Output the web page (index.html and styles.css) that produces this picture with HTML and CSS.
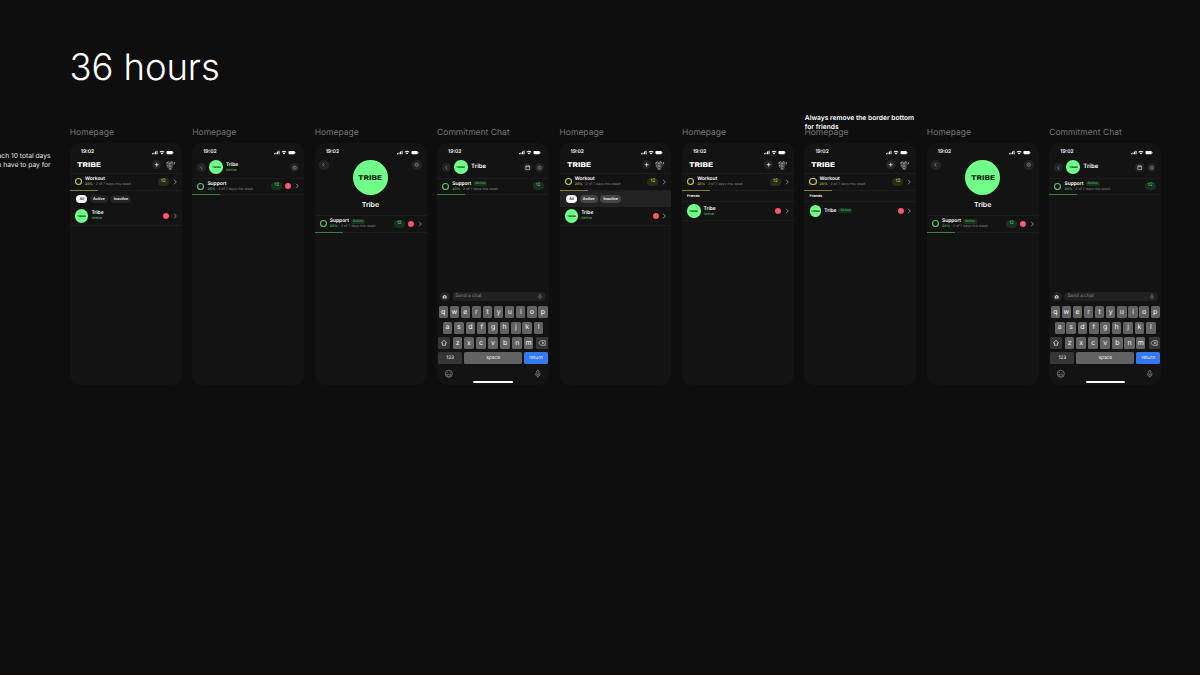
FILE: index.html
```html
<!DOCTYPE html>
<html lang="en">
<head>
<meta charset="utf-8">
<title>36 hours</title>
<link rel="stylesheet" href="styles.css">
</head>
<body>
<svg class="defs" aria-hidden="true">
  <symbol id="status" viewBox="0 0 22 5"><path d="M0 3.2h1v1.1H0zM1.5 2.5h1v1.8h-1zM3 1.6h1v2.7H3zM4.5.7h1v3.6h-1z"/><path d="M7.5 1.9Q10 -.3 12.500 1.900L11.800 2.600Q10 1.100 8.200 2.600ZM8.700 3Q10 2 11.300 3L10 4.400Z"/><rect x="14.500" y=".9" width="6.300" height="3.300" rx=".9"/><path d="M21.200 1.900h.4v1.300h-.4z"/></symbol>
  <symbol id="plus" viewBox="0 0 10 10"><path d="M5 2.900v4.200M2.900 5h4.200" fill="none" stroke="#ddd" stroke-width=".9"/></symbol>
  <symbol id="back" viewBox="0 0 10 10"><path d="M5.700 3.200 4 5l1.700 1.800" fill="none" stroke="#999" stroke-width=".7"/></symbol>
  <symbol id="gear" viewBox="0 0 10 10"><circle cx="5" cy="5" r="1.700" fill="none" stroke="#888" stroke-width=".9"/><circle cx="5" cy="5" r=".5" fill="#888"/></symbol>
  <symbol id="cal" viewBox="0 0 10 10"><path d="M3 3.200h4v3.700H3zM3 4h4M4 2.600v.8M6 2.600v.8" fill="none" stroke="#ccc" stroke-width=".65"/></symbol>
  <symbol id="next" viewBox="0 0 4 6"><path d="M1 .7 3.300 3 1 5.300" fill="none" stroke="#aaa" stroke-width=".75"/></symbol>
  <symbol id="face" viewBox="0 0 10 10"><path d="M1.200 2.500 3.200 1l1.500 1 1.900-1.400 1 1.400 1 2.400-1.400.8.300 1.700-1.200 2.700-1.500 1.100-1.500-.9.300-1.800-1.700-1.200z" fill="#4c4c4c"/><path d="M1.300 3.200l2-1.600M3.800 3.600l1.900-.7M3.600 5.600l2.400.3M6 1.400l1.200 1.500M8.900 1.900l.5 2.300M3.800 7.700l1.700.9M2 5l.8 1" stroke="#b5b5b5" stroke-width=".7" fill="none"/></symbol>
  <symbol id="camera" viewBox="0 0 10 10"><path d="M2.900 3.900h1l.5-.7h1.200l.5.7h1v3H2.900z" fill="#ccc"/><circle cx="5" cy="5.300" r=".8" fill="#333"/></symbol>
  <symbol id="mic" viewBox="0 0 8 10"><rect x="2.900" y="1.500" width="2.200" height="4.300" rx="1.100" fill="none" stroke="currentColor" stroke-width=".7"/><path d="M1.700 4.600v.6a2.300 2.300 0 0 0 4.600 0v-.6M4 7.500v1.300" fill="none" stroke="currentColor" stroke-width=".7"/></symbol>
  <symbol id="smile" viewBox="0 0 10 10"><circle cx="5" cy="5" r="3.700" fill="none" stroke="#999" stroke-width=".7"/><path d="M2.800 5.500h4.400a2.200 2.200 0 0 1-4.400 0z" fill="none" stroke="#999" stroke-width=".6"/><path d="M3.700 3.100v1M6.300 3.100v1" stroke="#999" stroke-width=".6"/></symbol>
  <symbol id="shift" viewBox="0 0 10 10"><path d="M5 1.500 8.300 5H6.800v2.900H3.200V5H1.700z" fill="none" stroke="#eee" stroke-width=".85"/></symbol>
  <symbol id="del" viewBox="0 0 10 10"><path d="M3.500 2.200h5.500v5.600H3.500L.9 5zM4.800 3.700l2.500 2.600M7.300 3.700 4.800 6.300" fill="none" stroke="#ddd" stroke-width=".8"/></symbol>
  <symbol id="word" viewBox="0 0 24 6"><text x="0" y="5.300" textLength="24" lengthAdjust="spacingAndGlyphs" font-size="6.600" font-weight="800">TRIBE</text></symbol>
</svg>

<main class="canvas">
  <h1 class="title">36 hours</h1>
  <p class="note note-left">ach 10 total days<br>u have to pay for</p>
  <p class="note note-top">Always remove the border bottom<br>for friends</p>

  <div class="frames">
    <section class="frame">
      <h2 class="label">Homepage</h2>
      <div class="phone">
        <div class="status"><span>19:02</span><svg><use href="#status"/></svg></div>
        <header class="bar home"><svg class="brand"><use href="#word"/></svg><svg class="round"><use href="#plus"/></svg><svg class="avatar"><use href="#face"/></svg></header>
        <div class="row workout"><i class="ring"></i><div class="info"><b>Workout</b><small><em>28%</em> · 2 of 7 days this week</small></div><span class="count">12</span><svg class="next"><use href="#next"/></svg></div>
        <nav class="chips"><span class="on">All</span><span>Active</span><span>Inactive</span></nav>
        <div class="row friend"><span class="logo"><svg><use href="#word"/></svg></span><div class="info"><b>Tribe</b><small><em>Active</em></small></div><span class="dot">1</span><svg class="next"><use href="#next"/></svg></div>
      </div>
    </section>

    <section class="frame">
      <h2 class="label">Homepage</h2>
      <div class="phone">
        <div class="status"><span>19:02</span><svg><use href="#status"/></svg></div>
        <header class="bar group"><svg class="round"><use href="#back"/></svg><span class="logo"><svg><use href="#word"/></svg></span><div class="info"><b>Tribe</b><small><em>Active</em></small></div><svg class="round"><use href="#gear"/></svg></header>
        <div class="row support"><i class="ring"></i><div class="info"><b>Support</b><small><em>28%</em> · 2 of 7 days this week</small></div><span class="count">12</span><span class="dot">1</span><svg class="next"><use href="#next"/></svg></div>
      </div>
    </section>

    <section class="frame">
      <h2 class="label">Homepage</h2>
      <div class="phone">
        <div class="status"><span>19:02</span><svg><use href="#status"/></svg></div>
        <header class="hero"><svg class="round"><use href="#back"/></svg><div class="profile"><span class="logo"><svg><use href="#word"/></svg></span><strong>Tribe</strong></div><svg class="round"><use href="#gear"/></svg></header>
        <div class="row support tall"><i class="ring"></i><div class="info"><b>Support <mark>Active</mark></b><small><em>28%</em> · 2 of 7 days this week</small></div><span class="count">12</span><span class="dot">1</span><svg class="next"><use href="#next"/></svg></div>
      </div>
    </section>

    <section class="frame">
      <h2 class="label">Commitment Chat</h2>
      <div class="phone">
        <div class="status"><span>19:02</span><svg><use href="#status"/></svg></div>
        <header class="bar group chat"><svg class="round"><use href="#back"/></svg><span class="logo"><svg><use href="#word"/></svg></span><div class="info"><b>Tribe</b></div><svg class="round"><use href="#cal"/></svg><svg class="round"><use href="#gear"/></svg></header>
        <div class="row support last"><i class="ring"></i><div class="info"><b>Support <mark>Active</mark></b><small><em>28%</em> · 2 of 7 days this week</small></div><span class="count">12</span></div>
        <div class="composer"><svg class="round"><use href="#camera"/></svg><div class="field">Send a chat<svg><use href="#mic"/></svg></div></div>
        <div class="keyboard">
          <div class="keys"><kbd>q</kbd><kbd>w</kbd><kbd>e</kbd><kbd>r</kbd><kbd>t</kbd><kbd>y</kbd><kbd>u</kbd><kbd>i</kbd><kbd>o</kbd><kbd>p</kbd></div>
          <div class="keys mid"><kbd>a</kbd><kbd>s</kbd><kbd>d</kbd><kbd>f</kbd><kbd>g</kbd><kbd>h</kbd><kbd>j</kbd><kbd>k</kbd><kbd>l</kbd></div>
          <div class="keys low"><kbd class="dark"><svg><use href="#shift"/></svg></kbd><kbd>z</kbd><kbd>x</kbd><kbd>c</kbd><kbd>v</kbd><kbd>b</kbd><kbd>n</kbd><kbd>m</kbd><kbd class="dark"><svg><use href="#del"/></svg></kbd></div>
          <div class="keys wide"><kbd class="dark">123</kbd><kbd>space</kbd><kbd class="return">return</kbd></div>
        </div>
        <div class="tools"><svg><use href="#smile"/></svg><svg><use href="#mic"/></svg></div>
        <div class="homebar"></div>
      </div>
    </section>

    <section class="frame">
      <h2 class="label">Homepage</h2>
      <div class="phone">
        <div class="status"><span>19:02</span><svg><use href="#status"/></svg></div>
        <header class="bar home"><svg class="brand"><use href="#word"/></svg><svg class="round"><use href="#plus"/></svg><svg class="avatar"><use href="#face"/></svg></header>
        <div class="row workout"><i class="ring"></i><div class="info"><b>Workout</b><small><em>28%</em> · 2 of 7 days this week</small></div><span class="count">12</span><svg class="next"><use href="#next"/></svg></div>
        <nav class="chips lit"><span class="on">All</span><span>Active</span><span>Inactive</span></nav>
        <div class="row friend"><span class="logo"><svg><use href="#word"/></svg></span><div class="info"><b>Tribe</b><small><em>Active</em></small></div><span class="dot">1</span><svg class="next"><use href="#next"/></svg></div>
      </div>
    </section>

    <section class="frame">
      <h2 class="label">Homepage</h2>
      <div class="phone">
        <div class="status"><span>19:02</span><svg><use href="#status"/></svg></div>
        <header class="bar home"><svg class="brand"><use href="#word"/></svg><svg class="round"><use href="#plus"/></svg><svg class="avatar"><use href="#face"/></svg></header>
        <div class="row workout"><i class="ring"></i><div class="info"><b>Workout</b><small><em>28%</em> · 2 of 7 days this week</small></div><span class="count">12</span><svg class="next"><use href="#next"/></svg></div>
        <h3 class="friends">Friends</h3>
        <div class="row friend"><span class="logo"><svg><use href="#word"/></svg></span><div class="info"><b>Tribe</b><small><em>Active</em></small></div><span class="dot">1</span><svg class="next"><use href="#next"/></svg></div>
      </div>
    </section>

    <section class="frame">
      <h2 class="label">Homepage</h2>
      <div class="phone">
        <div class="status"><span>19:02</span><svg><use href="#status"/></svg></div>
        <header class="bar home"><svg class="brand"><use href="#word"/></svg><svg class="round"><use href="#plus"/></svg><svg class="avatar"><use href="#face"/></svg></header>
        <div class="row workout"><i class="ring"></i><div class="info"><b>Workout</b><small><em>28%</em> · 2 of 7 days this week</small></div><span class="count">12</span><svg class="next"><use href="#next"/></svg></div>
        <h3 class="friends">Friends</h3>
        <div class="row friend compact"><span class="logo"><svg><use href="#word"/></svg></span><div class="info"><b>Tribe <mark>Active</mark></b></div><span class="dot">1</span><svg class="next"><use href="#next"/></svg></div>
      </div>
    </section>

    <section class="frame">
      <h2 class="label">Homepage</h2>
      <div class="phone">
        <div class="status"><span>19:02</span><svg><use href="#status"/></svg></div>
        <header class="hero"><svg class="round"><use href="#back"/></svg><div class="profile"><span class="logo"><svg><use href="#word"/></svg></span><strong>Tribe</strong></div><svg class="round"><use href="#gear"/></svg></header>
        <div class="row support tall"><i class="ring"></i><div class="info"><b>Support <mark>Active</mark></b><small><em>28%</em> · 2 of 7 days this week</small></div><span class="count">12</span><span class="dot">1</span><svg class="next"><use href="#next"/></svg></div>
      </div>
    </section>

    <section class="frame">
      <h2 class="label">Commitment Chat</h2>
      <div class="phone">
        <div class="status"><span>19:02</span><svg><use href="#status"/></svg></div>
        <header class="bar group chat"><svg class="round"><use href="#back"/></svg><span class="logo"><svg><use href="#word"/></svg></span><div class="info"><b>Tribe</b></div><svg class="round"><use href="#cal"/></svg><svg class="round"><use href="#gear"/></svg></header>
        <div class="row support last"><i class="ring"></i><div class="info"><b>Support <mark>Active</mark></b><small><em>28%</em> · 2 of 7 days this week</small></div><span class="count">12</span></div>
        <div class="composer"><svg class="round"><use href="#camera"/></svg><div class="field">Send a chat<svg><use href="#mic"/></svg></div></div>
        <div class="keyboard">
          <div class="keys"><kbd>q</kbd><kbd>w</kbd><kbd>e</kbd><kbd>r</kbd><kbd>t</kbd><kbd>y</kbd><kbd>u</kbd><kbd>i</kbd><kbd>o</kbd><kbd>p</kbd></div>
          <div class="keys mid"><kbd>a</kbd><kbd>s</kbd><kbd>d</kbd><kbd>f</kbd><kbd>g</kbd><kbd>h</kbd><kbd>j</kbd><kbd>k</kbd><kbd>l</kbd></div>
          <div class="keys low"><kbd class="dark"><svg><use href="#shift"/></svg></kbd><kbd>z</kbd><kbd>x</kbd><kbd>c</kbd><kbd>v</kbd><kbd>b</kbd><kbd>n</kbd><kbd>m</kbd><kbd class="dark"><svg><use href="#del"/></svg></kbd></div>
          <div class="keys wide"><kbd class="dark">123</kbd><kbd>space</kbd><kbd class="return">return</kbd></div>
        </div>
        <div class="tools"><svg><use href="#smile"/></svg><svg><use href="#mic"/></svg></div>
        <div class="homebar"></div>
      </div>
    </section>
  </div>
</main>
</body>
</html>
```
FILE: styles.css
```css
* { box-sizing: border-box; margin: 0; padding: 0; }
body { background: #0e0e0e; color: #fff; font-family: Inter, "Liberation Sans", sans-serif; overflow: hidden; text-rendering: geometricPrecision; }
.defs { position: absolute; width: 0; height: 0; }
svg { display: block; flex: none; }
.canvas { position: relative; width: 1200px; height: 675px; overflow: hidden; padding-top: 44px; border-bottom: 2px solid #16070a; }
.title { margin-left: 69.500px; height: 82px; font-size: 36.500px; line-height: 46px; font-weight: 350; letter-spacing: -.1px; }

/* Free-floating canvas notes */
.note { position: absolute; white-space: nowrap; }
.note-left { right: 1149.500px; top: 152px; font-size: 6.700px; line-height: 8.600px; text-align: right; color: #e4e4e4; }
.note-top { left: 804.800px; top: 114.300px; font-size: 6.700px; line-height: 8.600px; font-weight: 600; z-index: 1; }

.frames { display: flex; gap: 10.500px; padding-left: 69.800px; }
.frame { width: 111.950px; flex: none; }
.label { height: 17px; font-size: 8.500px; line-height: 14px; font-weight: 400; color: #737373; white-space: nowrap; letter-spacing: 0; }
.phone { display: flex; flex-direction: column; height: 242px; border-radius: 10px; background: #131313; overflow: hidden; }
.phone > * { flex-shrink: 0; }

.status { display: flex; justify-content: space-between; align-items: center; height: 14px; padding: 4px 8px 0 11px; font-size: 5px; font-weight: 600; }
.status svg { width: 22px; height: 5px; fill: #fff; }

.bar { display: flex; align-items: center; border-bottom: .5px solid #1c1c1c; }
.home { height: 16.500px; padding: 0 6.500px 0 7px; }
.brand { width: 24px; height: 6px; fill: #fff; margin-right: auto; }
.round { width: 9.400px; height: 9.400px; border-radius: 50%; background: #242424; }
.avatar { width: 10.500px; height: 10.500px; margin-left: 3.500px; }
.group { height: 21.700px; padding: 0 5px 0 4.500px; }
.group .logo { margin: 0 3.200px .5px; }
.group .info { padding-bottom: .5px; }
.group .round + .round { margin-left: 2.600px; }
.chat .logo { margin-right: 3.300px; }
.chat .info b { font-size: 6px; }

.logo { display: flex; align-items: center; justify-content: center; flex: none; width: 13.600px; height: 13.600px; border-radius: 50%; background: #70ff88; }
.logo svg { width: 9.200px; height: 2.600px; fill: #0b3514; }

.hero { display: flex; justify-content: space-between; height: 58.500px; padding: 3.300px 5px 0 4.600px; border-bottom: .5px solid #1c1c1c; }
.profile { display: flex; flex-direction: column; align-items: center; }
.profile .logo { width: 35px; height: 35px; }
.profile .logo svg { width: 24px; height: 6px; fill: #0b2511; }
.profile strong { margin-top: 4.400px; font-size: 7px; line-height: 9px; font-weight: 600; }

.row { display: flex; align-items: center; padding: 0 5px; border-bottom: .6px solid #1c1c1c; }
.workout, .support { background: linear-gradient(var(--line), var(--line)) 0 100% / 28px 1px no-repeat border-box; border-bottom-color: #ffffff0a; }
.workout { height: 17.500px; --line: #77782a; --tone: #c6ca42; --tint: #292a17; }
.support { height: 16.300px; --line: #2c7b3c; --tone: #58ca6c; --tint: #18301e; }
.tall { height: 17.500px; }
.ring { flex: none; width: 7.200px; height: 7.200px; box-shadow: inset 0 0 0 1.100px var(--tone); border-radius: 50%; margin-right: 3px; }
.info { flex: 1; display: flex; flex-direction: column; white-space: nowrap; }
.info b { display: flex; align-items: center; gap: 2px; font-size: 4.900px; line-height: 6px; font-weight: 600; }
.info small { font-size: 3.500px; line-height: 5px; color: #858585; }
.info em { font-style: normal; font-weight: 500; color: var(--tone, #49bd60); }
.info mark { padding: 0 1.900px; border-radius: 2px; background: #16321c; color: #53b965; font-size: 3.400px; line-height: 4.800px; font-weight: 500; }
.count { width: 11px; height: 8px; border-radius: 4px; background: var(--tint); color: var(--tone); font-size: 4.600px; line-height: 8px; font-weight: 500; text-align: center; }
.dot { width: 6px; height: 6px; border-radius: 50%; background: #f5516a; color: #ffb3bd; font-size: 3.500px; line-height: 6px; text-align: center; }
.next { width: 4px; height: 6px; margin-left: 3.800px; }
.workout .next { margin-left: 4px; }
.support .dot { margin-left: 3px; }
.last { padding-right: 5.500px; }

.chips { display: flex; align-items: center; gap: 2.500px; height: 15.700px; padding-left: 6.500px; }
.chips span { height: 8.600px; padding: 0 3.200px; border-radius: 5px; background: #232323; font-size: 3.800px; line-height: 8.600px; font-weight: 600; }
.chips .on, .chips.lit .on { background: #fff; color: #111; }
.lit { background: #222; }
.chips.lit span { background: #444; }
.friend { height: 19.300px; }
.friend .logo { margin-right: 3px; }
.friends { height: 11px; padding-left: 5px; font-size: 3.500px; line-height: 10px; font-weight: 600; border-bottom: .5px solid #1c1c1c; }
.compact { height: 17.800px; border-bottom: 0; padding-left: 5.500px; }
.compact .logo { width: 11.400px; height: 11.400px; }

.composer { display: flex; align-items: center; gap: 2.600px; height: 10px; margin-top: 96.300px; padding: 0 3.200px; }
.field { flex: 1; display: flex; align-items: center; justify-content: space-between; height: 9px; padding: 0 3px; border-radius: 4.500px; background: #212121; font-size: 4.700px; color: #858585; }
.field svg { width: 6px; height: 7px; }
.keyboard { display: flex; flex-direction: column; gap: 3.200px; margin-top: 5.100px; }
.keys { display: grid; grid-template-columns: repeat(10, 1fr); gap: 1.800px; height: 12px; padding: 0 1.400px; }
.mid { grid-template-columns: repeat(9, 1fr); padding: 0 5.700px; }
.low { grid-template-columns: 11.700px repeat(7, 1fr) 11.700px; padding: 0 1px; }
.low kbd:nth-child(2) { margin-left: 1.700px; }
.low kbd:nth-child(8) { margin-right: 1.700px; }
.wide { grid-template-columns: 24px 1fr 24px; padding: 0 1px; }
kbd { display: flex; align-items: center; justify-content: center; min-width: 0; border-radius: 1.600px; background: #626262; color: #f2f2f2; font-family: inherit; font-size: 7px; line-height: 10px; padding-bottom: .3px; }
kbd svg { width: 8px; height: 8px; }
.dark { background: #353535; }
.wide kbd { font-size: 4.800px; }
.wide .return { background: #3478f0; }
.tools { display: flex; justify-content: space-between; margin-top: 5.300px; padding: 0 6.500px; color: #999; }
.tools svg { width: 9.600px; height: 9.600px; }
.homebar { width: 39.500px; height: 1.500px; margin: 2.300px auto 0; border-radius: 1px; background: #fff; }
```
